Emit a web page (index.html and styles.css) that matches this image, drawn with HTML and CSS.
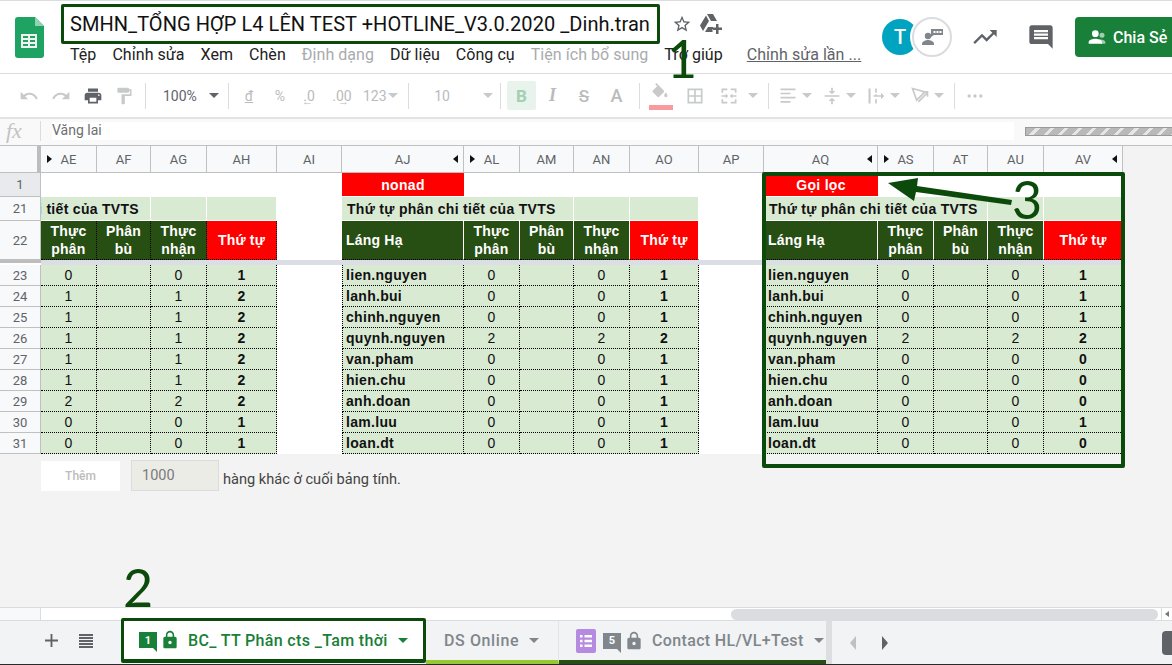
FILE: index.html
```html
<!DOCTYPE html>
<html lang="vi">
<head>
<meta charset="utf-8">
<title>SMHN</title>
<link rel="stylesheet" href="styles.css">
</head>
<body>
<div class="app">
  <header class="top">
    <svg class="logo" viewBox="0 0 29 41"><path fill="#1ea362" d="M3 0h17l9 9v29a3 3 0 0 1-3 3H3a3 3 0 0 1-3-3V3a3 3 0 0 1 3-3z"/><path fill="#8fd3b2" d="M20 0l9 9h-9z"/><path fill="#f1f1f1" d="M6 17h16v14H6zm2 2v2h5v-2zm7 0v2h5v-2zm-7 4v2h5v-2zm7 0v2h5v-2zm-7 4v2h5v-2zm7 0v2h5v-2z" fill-rule="evenodd"/></svg>
    <div class="doc">
      <div class="titlerow">
        <div class="title">SMHN_TỔNG HỢP L4 LÊN TEST +HOTLINE_V3.0.2020 _Dinh.tran</div>
        <svg class="star" viewBox="0 0 24 24"><path d="M22 9.24l-7.19-.62L12 2 9.19 8.63 2 9.24l5.46 4.73L5.82 21 12 17.27 18.18 21l-1.63-7.03L22 9.24zM12 15.4l-3.76 2.27 1-4.28-3.32-2.88 4.38-.38L12 6.1l1.71 4.04 4.38.38-3.32 2.88 1 4.28L12 15.4z"/></svg>
        <svg class="drive" viewBox="0 0 22 20"><path d="M7 0h6l4 7h-6zM6 1.500l3 5.500-6 10-3-5.500zM5 18l3-5h5v2h-0.500v3z"/><path d="M16 10h2.500v3.500H22V16h-3.500v4H16v-4h-3v-2.500h3z"/></svg>
      </div>
      <nav class="menu">
        <span>Tệp</span><span>Chỉnh sửa</span><span>Xem</span><span>Chèn</span><span class="off">Định dạng</span><span>Dữ liệu</span><span>Công cụ</span><span class="off">Tiện ích bổ sung</span><span>Trợ giúp</span><span class="last">Chỉnh sửa lần ...</span>
      </nav>
    </div>
    <div class="right">
      <div class="ava">T</div>
      <div class="ava2"><svg viewBox="0 0 22 16"><circle cx="7" cy="7" r="3.200"/><path d="M1 16v-1c0-3 4-4 6-4s6 1 6 4v1z"/><path d="M10 0h12v6h-9l-3 2z"/><path fill="#fff" d="M12.500 2h2v2h-2zm3 0h2v2h-2zm3 0h2v2h-2z"/></svg></div>
      <svg class="trend" viewBox="0 0 24 24"><path d="M16 6l2.290 2.290-4.880 4.880-4-4L2 16.590 3.410 18l6-6 4 4 6.300-6.290L22 12V6z"/></svg>
      <svg class="cmt" viewBox="0 0 24 24"><path d="M21.990 4c0-1.100-.89-2-1.990-2H4c-1.100 0-2 .9-2 2v12c0 1.100.9 2 2 2h14l4 4-.01-18zM18 14H6v-2h12v2zm0-3H6V9h12v2zm0-3H6V6h12v2z"/></svg>
      <div class="share"><svg viewBox="0 0 24 24"><circle cx="18" cy="10" r="3" opacity=".6"/><path d="M16 20v-2c0-1-.5-2-1.500-2.700 3-.6 7.500.5 7.500 2.700v2z" opacity=".6"/><circle cx="10" cy="8" r="4"/><path d="M2 20v-2c0-2.700 5.300-4 8-4s8 1.300 8 4v2z"/></svg><span>Chia Sẻ</span></div>
    </div>
  </header>

  <div class="tools">
    <span class="tb w32"><svg viewBox="0 0 24 24"><path d="M12.500 8c-2.650 0-5.050.99-6.900 2.600L2 7v9h9l-3.620-3.620c1.390-1.160 3.160-1.880 5.120-1.880 3.540 0 6.550 2.310 7.600 5.500l2.370-.78C21.080 11.030 17.150 8 12.500 8z"/></svg></span>
    <span class="tb w32"><svg viewBox="0 0 24 24"><path d="M18.400 10.600C16.550 8.990 14.150 8 11.500 8c-4.650 0-8.580 3.030-9.960 7.220L3.900 16c1.050-3.190 4.050-5.500 7.600-5.500 1.950 0 3.730.72 5.120 1.880L13 16h9V7l-3.600 3.600z"/></svg></span>
    <span class="tb w32 dark"><svg viewBox="0 0 24 24"><path d="M19 8H5c-1.660 0-3 1.340-3 3v6h4v4h12v-4h4v-6c0-1.660-1.340-3-3-3zm-3 11H8v-5h8v5zm3-7c-.55 0-1-.45-1-1s.45-1 1-1 1 .45 1 1-.45 1-1 1zm-1-9H6v4h12V3z"/></svg></span>
    <span class="tb w30"><svg viewBox="0 0 24 24"><path d="M18 4V3c0-.55-.45-1-1-1H5c-.55 0-1 .45-1 1v4c0 .55.45 1 1 1h12c.55 0 1-.45 1-1V6h1v4H9v11c0 .55.45 1 1 1h2c.55 0 1-.45 1-1v-9h8V4h-3z"/></svg></span>
    <i class="sep m6"></i>
    <span class="tb zoom">100%</span>
    <span class="tb w28 dark"><b class="caret"></b></span>
    <i class="sep"></i>
    <span class="tb w40 txt und">đ</span>
    <span class="tb w22 txt">%</span>
    <span class="tb w36 txt arrowl">.0</span>
    <span class="tb w30 txt arrowr">.00</span>
    <span class="tb w51 txt fmt">123<b class="caret"></b></span>
    <i class="sep"></i>
    <span class="tb w66 txt">10</span>
    <span class="tb w25"><b class="caret"></b></span>
    <i class="sep"></i>
    <span class="tb w29 txt bold on m6">B</span>
    <span class="tb w33 txt ital">I</span>
    <span class="tb w30 txt strike">S</span>
    <span class="tb w35 txt boldA">A</span>
    <i class="sep m5"></i>
    <span class="tb w40 fillb"><svg viewBox="0 0 24 24"><path d="M16.560 8.940L7.620 0 6.210 1.410l2.380 2.380-5.150 5.150c-.59.59-.59 1.540 0 2.120l5.500 5.500c.29.29.68.44 1.060.44s.77-.15 1.060-.44l5.500-5.500c.59-.58.59-1.530 0-2.120zM19 11.500s-2 2.170-2 3.500c0 1.100.9 2 2 2s2-.9 2-2c0-1.330-2-3.500-2-3.500z"/></svg></span>
    <span class="tb w30"><svg viewBox="0 0 24 24"><path d="M3 3v18h18V3H3zm8 16H5v-6h6v6zm0-8H5V5h6v6zm8 8h-6v-6h6v6zm0-8h-6V5h6v6z"/></svg></span>
    <span class="tb w38"><svg viewBox="0 0 24 24"><path d="M3 3h7v2H5v3H3zm11 0h7v5h-2V5h-5zM3 16h2v3h5v2H3zm16 0h2v5h-7v-2h5zM3 11h5V9l3 3-3 3v-2H3zm18 0h-5V9l-3 3 3 3v-2h5z"/></svg></span>
    <span class="tb w10"><b class="caret"></b></span>
    <i class="sep m10"></i>
    <span class="tb w25 m6"><svg viewBox="0 0 24 24"><path d="M3 3h18v2H3zm0 5h12v2H3zm0 5h18v2H3zm0 5h12v2H3z"/></svg></span>
    <span class="tb w14"><b class="caret"></b></span>
    <span class="tb w24 m6"><svg viewBox="0 0 24 24"><path d="M3 11h18v2H3zM12 10L8 6h3V2h2v4h3zM12 14l4 4h-3v4h-2v-4H8z"/></svg></span>
    <span class="tb w14"><b class="caret"></b></span>
    <span class="tb w24 m6"><svg viewBox="0 0 24 24"><path d="M3 3h2.500v18H3zM11 3h2v5h-2zm0 7h2v2h-2zm0 6h2v5h-2zM9 11h9V8l4 4-4 4v-3H9z"/></svg></span>
    <span class="tb w14"><b class="caret"></b></span>
    <span class="tb w24 m6"><svg viewBox="0 0 24 24"><path class="outl" d="M3 3l15 4-10 10zM10 19L21 8M15 7h6v6"/></svg></span>
    <span class="tb w14"><b class="caret"></b></span>
    <i class="sep m8"></i>
    <span class="tb w40"><svg viewBox="0 0 24 24"><circle cx="5" cy="12" r="2"/><circle cx="12" cy="12" r="2"/><circle cx="19" cy="12" r="2"/></svg></span>
  </div>

  <div class="fbar">
    <span class="fx">fx</span>
    <i class="fsep"></i>
    <div class="finput">Văng lai</div>
    <div class="stripes"></div>
  </div>

  <div class="sheet">
    <div class="cols">
      <div class="corner"></div>
      <div class="ch hl">AE</div><div class="ch">AF</div><div class="ch">AG</div><div class="ch">AH</div><div class="ch">AI</div>
      <div class="ch hr">AJ</div><div class="ch hl">AL</div><div class="ch">AM</div><div class="ch">AN</div><div class="ch">AO</div><div class="ch">AP</div>
      <div class="ch hr">AQ</div><div class="ch hl">AS</div><div class="ch">AT</div><div class="ch">AU</div><div class="ch hr">AV</div>

      <div class="rh">1</div>
      <div class="blank s5"></div><div class="red">nonad</div><div class="blank s5"></div>
      <div class="red">Gọi lọc</div><div class="blank s4"></div>

      <div class="rh">21</div>
      <div class="lg span2 over"><span>Thứ tự phân chi tiết của TVTS</span></div><div class="lg"></div><div class="lg"></div><div class="blank"></div>
      <div class="lg span3 lead"><span>Thứ tự phân chi tiết của TVTS</span></div><div class="lg"></div><div class="lg"></div><div class="blank"></div>
      <div class="lg span3 lead"><span>Thứ tự phân chi tiết của TVTS</span></div><div class="lg"></div><div class="lg"></div>

      <div class="rh">22</div>
      <div class="dk dot">Thực<br>phân</div><div class="dk dot">Phân<br>bù</div><div class="dk dot">Thực<br>nhận</div><div class="dk dot rd">Thứ tự</div><div class="blank"></div>
      <div class="dk left">Láng Hạ</div><div class="dk">Thực<br>phân</div><div class="dk">Phân<br>bù</div><div class="dk">Thực<br>nhận</div><div class="dk rd">Thứ tự</div><div class="blank"></div>
      <div class="dk left">Láng Hạ</div><div class="dk">Thực<br>phân</div><div class="dk">Phân<br>bù</div><div class="dk">Thực<br>nhận</div><div class="dk rd">Thứ tự</div>

      <div class="frz"></div>

      <div class="rh">23</div><div class="c">0</div><div class="c"></div><div class="c">0</div><div class="c b">1</div><div class="blank"></div><div class="c n">lien.nguyen</div><div class="c">0</div><div class="c"></div><div class="c">0</div><div class="c b">1</div><div class="blank"></div><div class="c n">lien.nguyen</div><div class="c">0</div><div class="c"></div><div class="c">0</div><div class="c b">1</div>
      <div class="rh">24</div><div class="c">1</div><div class="c"></div><div class="c">1</div><div class="c b">2</div><div class="blank"></div><div class="c n">lanh.bui</div><div class="c">0</div><div class="c"></div><div class="c">0</div><div class="c b">1</div><div class="blank"></div><div class="c n">lanh.bui</div><div class="c">0</div><div class="c"></div><div class="c">0</div><div class="c b">1</div>
      <div class="rh">25</div><div class="c">1</div><div class="c"></div><div class="c">1</div><div class="c b">2</div><div class="blank"></div><div class="c n">chinh.nguyen</div><div class="c">0</div><div class="c"></div><div class="c">0</div><div class="c b">1</div><div class="blank"></div><div class="c n">chinh.nguyen</div><div class="c">0</div><div class="c"></div><div class="c">0</div><div class="c b">1</div>
      <div class="rh">26</div><div class="c">1</div><div class="c"></div><div class="c">1</div><div class="c b">2</div><div class="blank"></div><div class="c n">quynh.nguyen</div><div class="c">2</div><div class="c"></div><div class="c">2</div><div class="c b">2</div><div class="blank"></div><div class="c n">quynh.nguyen</div><div class="c">2</div><div class="c"></div><div class="c">2</div><div class="c b">2</div>
      <div class="rh">27</div><div class="c">1</div><div class="c"></div><div class="c">1</div><div class="c b">2</div><div class="blank"></div><div class="c n">van.pham</div><div class="c">0</div><div class="c"></div><div class="c">0</div><div class="c b">1</div><div class="blank"></div><div class="c n">van.pham</div><div class="c">0</div><div class="c"></div><div class="c">0</div><div class="c b">0</div>
      <div class="rh">28</div><div class="c">1</div><div class="c"></div><div class="c">1</div><div class="c b">2</div><div class="blank"></div><div class="c n">hien.chu</div><div class="c">0</div><div class="c"></div><div class="c">0</div><div class="c b">1</div><div class="blank"></div><div class="c n">hien.chu</div><div class="c">0</div><div class="c"></div><div class="c">0</div><div class="c b">0</div>
      <div class="rh">29</div><div class="c">2</div><div class="c"></div><div class="c">2</div><div class="c b">2</div><div class="blank"></div><div class="c n">anh.doan</div><div class="c">0</div><div class="c"></div><div class="c">0</div><div class="c b">1</div><div class="blank"></div><div class="c n">anh.doan</div><div class="c">0</div><div class="c"></div><div class="c">0</div><div class="c b">0</div>
      <div class="rh">30</div><div class="c">0</div><div class="c"></div><div class="c">0</div><div class="c b">1</div><div class="blank"></div><div class="c n">lam.luu</div><div class="c">0</div><div class="c"></div><div class="c">0</div><div class="c b">1</div><div class="blank"></div><div class="c n">lam.luu</div><div class="c">0</div><div class="c"></div><div class="c">0</div><div class="c b">1</div>
      <div class="rh">31</div><div class="c">0</div><div class="c"></div><div class="c">0</div><div class="c b">1</div><div class="blank"></div><div class="c n">loan.dt</div><div class="c">0</div><div class="c"></div><div class="c">0</div><div class="c b">1</div><div class="blank"></div><div class="c n">loan.dt</div><div class="c">0</div><div class="c"></div><div class="c">0</div><div class="c b">0</div>
    </div>
    <div class="addrows">
      <div class="addbtn">Thêm</div>
      <div class="addnum">1000</div>
      <div class="addtxt">hàng khác ở cuối bảng tính.</div>
    </div>
  </div>

  <div class="hscroll"><div class="hs-l"></div><div class="hs-m"><div class="thumb"></div></div><div class="hs-r"><b class="tri-l small"></b></div></div>

  <div class="tabs">
    <svg class="t-plus" viewBox="0 0 14 14"><path d="M6 0h2v6h6v2H8v6H6V8H0V6h6z"/></svg>
    <svg class="t-list" viewBox="0 0 14 14"><path d="M0 0h14v2H0zm0 3h14v2H0zm0 3h14v2H0zm0 3h14v2H0zm0 3h14v2H0z"/></svg>
    <div class="tab active">
      <span class="badge grn">1</span>
      <svg class="lock grnf" viewBox="0 0 24 24"><path d="M18 8h-1V6c0-2.760-2.240-5-5-5S7 3.240 7 6v2H6c-1.100 0-2 .9-2 2v10c0 1.100.9 2 2 2h12c1.100 0 2-.9 2-2V10c0-1.100-.9-2-2-2zm-6 9c-1.100 0-2-.9-2-2s.9-2 2-2 2 .9 2 2-.9 2-2 2zm3.100-9H8.900V6c0-1.710 1.390-3.100 3.100-3.100 1.710 0 3.100 1.390 3.100 3.100v2z"/></svg>
      <span class="tname">BC_ TT Phân cts _Tam thời</span>
      <b class="caret"></b>
    </div>
    <div class="tab t2">
      <span class="tname">DS Online</span>
      <b class="caret"></b>
    </div>
    <div class="tab t3">
      <svg class="form" viewBox="0 0 20 24"><rect width="20" height="24" rx="2" fill="#b58ae0"/><path fill="#fff" d="M4 6h2.500v2.500H4zm4.500 0H16v2.500H8.500zM4 10.800h2.500v2.500H4zm4.500 0H16v2.500H8.500zM4 15.500h2.500V18H4zm4.500 0H16V18H8.500z"/></svg>
      <span class="badge gry">5</span>
      <svg class="lock gryf" viewBox="0 0 24 24"><path d="M18 8h-1V6c0-2.760-2.240-5-5-5S7 3.240 7 6v2H6c-1.100 0-2 .9-2 2v10c0 1.100.9 2 2 2h12c1.100 0 2-.9 2-2V10c0-1.100-.9-2-2-2zm-6 9c-1.100 0-2-.9-2-2s.9-2 2-2 2 .9 2 2-.9 2-2 2zm3.100-9H8.900V6c0-1.710 1.390-3.100 3.100-3.100 1.710 0 3.100 1.390 3.100 3.100v2z"/></svg>
      <span class="tname">Contact HL/VL+Test</span>
      <b class="caret"></b>
    </div>
    <div class="tsep"></div>
    <b class="tri-l nav1"></b>
    <b class="tri-r nav2"></b>
    <div class="explore"></div>
  </div>

  <div class="anno one">1</div>
  <div class="anno two">2</div>
  <div class="anno three">3</div>
  <div class="box3"></div>
  <svg class="arrow" viewBox="0 0 140 40"><path fill="#0b4a0b" d="M8 13L38 8l-1 8 95 14-1 5-95-13-2 9z"/></svg>
</div>
</body>
</html>
```
FILE: styles.css
```css
* { box-sizing: border-box; }
html, body { margin: 0; padding: 0; }
body { font-family: Roboto, "Liberation Sans", sans-serif; background: #f3f3f3; }
.app { position: relative; width: 1172px; height: 665px; overflow: hidden; display: flex; flex-direction: column; background: #f3f3f3; }

/* top bar */
.top { height: 74px; flex: none; display: flex; background: #fff; border-top: 1px solid #dadce0; border-bottom: 1px solid #dadce0; overflow: hidden; }
.logo { width: 29px; height: 41px; margin: 16px 17px 0 15px; flex: none; }
.doc { width: 821px; flex: none; padding-top: 3px; }
.titlerow { display: flex; align-items: center; }
.title { width: 599px; height: 40px; flex: none; border: 3px solid #0b4a0b; border-radius: 2px; padding-left: 6px; font-size: 20px; line-height: 34px; letter-spacing: 0.05px; color: #111; white-space: nowrap; overflow: hidden; }
.star { width: 20px; height: 20px; margin-left: 12px; fill: #5f6368; }
.drive { width: 22px; height: 20px; margin-left: 8px; fill: #5f6368; }
.menu { display: flex; gap: 16px; padding-left: 9px; font-size: 16px; line-height: 22px; letter-spacing: 0.05px; color: #222; white-space: nowrap; }
.menu .off { color: #a9abae; }
.menu .last { margin-left: 8px; color: #5f6368; text-decoration: underline; }
.right { display: flex; align-items: center; height: 72px; flex: none; }
.ava { width: 36px; height: 36px; border-radius: 50%; background: #00a4c0; color: #fff; font-size: 20px; font-weight: 500; display: flex; align-items: center; justify-content: center; flex: none; }
.ava2 { width: 40px; height: 40px; margin-left: -6px; border-radius: 50%; background: #fff; border: 2px solid #dadce0; box-shadow: 0 0 0 2px #fff; display: flex; align-items: center; justify-content: center; flex: none; position: relative; }
.ava2 svg { width: 22px; height: 16px; fill: #80868b; }
.trend { width: 28px; height: 28px; margin-left: 19px; fill: #5f6368; flex: none; }
.cmt { width: 28px; height: 28px; margin-left: 28px; fill: #5f6368; flex: none; }
.share { width: 120px; height: 40px; margin-left: 20px; border-radius: 4px; background: #188038; color: #fff; display: flex; align-items: center; padding-left: 12px; gap: 6px; font-size: 16px; font-weight: 500; flex: none; }
.share svg { width: 20px; height: 20px; fill: #fff; }

/* toolbar */
.tools { height: 45px; flex: none; display: flex; align-items: center; padding-left: 13px; background: #fff; border-bottom: 2px solid #e3e3e3; color: #b9bbbe; font-size: 14px; }
.tb { display: flex; align-items: center; justify-content: center; height: 29px; flex: none; fill: #c8c9cb; }
.tb svg { width: 20px; height: 20px; }
.tb.dark { fill: #5f6368; }
.outl { fill: none; stroke: #c8c9cb; stroke-width: 2; }
.w10 { width: 10px; } .w14 { width: 14px; } .w22 { width: 22px; } .w24 { width: 24px; } .w25 { width: 25px; } .w28 { width: 28px; } .w29 { width: 29px; } .w30 { width: 30px; } .w32 { width: 32px; } .w33 { width: 33px; } .w35 { width: 35px; } .w36 { width: 36px; } .w38 { width: 38px; } .w40 { width: 40px; } .w51 { width: 51px; } .w66 { width: 66px; }
.m5 { margin-left: 5px; } .m6 { margin-left: 6px; } .m8 { margin-left: 8px; } .m10 { margin-left: 10px; }
.zoom { width: 54px; padding-left: 17px; justify-content: flex-start; color: #5f6368; }
.sep { width: 1px; height: 26px; background: #dadce0; flex: none; }
.caret { display: inline-block; width: 0; height: 0; border-left: 5px solid transparent; border-right: 5px solid transparent; border-top: 5px solid #c8c9cb; }
.tb.dark .caret { border-top-color: #5f6368; }
.txt { color: #b9bbbe; }
.und { text-decoration: underline; }
.fmt { justify-content: flex-start; padding-left: 6px; gap: 1px; }
.bold { font-weight: 700; font-size: 17px; }
.on { background: #e8f3ec; color: #a3cfb4; border-radius: 2px; }
.ital { font-style: italic; font-family: "Liberation Serif", serif; font-size: 18px; font-weight: 700; }
.strike { font-size: 17px; text-decoration: line-through; font-weight: 500; }
.boldA { font-size: 18px; font-weight: 500; }
.arrowl, .arrowr { position: relative; }
.arrowl::after { content: "←"; position: absolute; left: 11px; top: 15px; font-size: 11px; line-height: 12px; }
.arrowr::after { content: "→"; position: absolute; left: 11px; top: 15px; font-size: 11px; line-height: 12px; }
.fillb svg { margin-top: -6px; }
.fillb { position: relative; }
.fillb::after { content: ""; position: absolute; left: 9px; bottom: 0; width: 24px; height: 5px; background: #f99a9e; }

/* formula bar */
.fbar { height: 27px; flex: none; display: flex; align-items: center; background: #f9f9f9; border-bottom: 1px solid #c0c0c0; padding-bottom: 2px; }
.fx { width: 40px; padding-left: 6px; font: italic 22px "Liberation Serif", serif; color: #c3c3c3; flex: none; }
.fsep { width: 1px; height: 20px; background: #dadce0; flex: none; }
.finput { width: 962px; height: 18px; margin-left: 11px; background: #fff; font-size: 14px; line-height: 16px; color: #6d6f72; flex: none; }
.stripes { width: 160px; height: 9px; margin-left: 11px; border: 1px solid #999; background: repeating-linear-gradient(135deg, #b9b9b9 0 7px, #e6e6e6 7px 10px); flex: none; }

/* sheet */
.sheet { height: 461px; flex: none; display: flex; flex-direction: column; }
.cols { width: 1123px; display: grid; grid-template-columns: 41px 56px 54px 56px 70px 65px 122px 56px 54px 56px 69px 65px 114px 56px 54px 56px 79px; grid-template-rows: 27px 24px 24px 39px 5px repeat(9, 21px); background: #fff; font: 14px "Liberation Sans", Arial, sans-serif; color: #111; }
.corner { background: #f8f9fa; border-right: 4px solid #bdbdbd; border-bottom: 1px solid #c0c0c0; }
.ch { position: relative; display: flex; align-items: center; justify-content: center; background: #f8f9fa; border-right: 1px solid #c0c0c0; border-bottom: 1px solid #c0c0c0; font: 13px Roboto, sans-serif; color: #5f6368; }
.hl::before { content: ""; position: absolute; left: 6px; top: 9px; border-left: 5px solid #111; border-top: 4px solid transparent; border-bottom: 4px solid transparent; }
.hr::after { content: ""; position: absolute; right: 5px; top: 9px; border-right: 5px solid #111; border-top: 4px solid transparent; border-bottom: 4px solid transparent; }
.rh { display: flex; align-items: center; justify-content: center; background: #f8f9fa; border-right: 1px solid #c0c0c0; border-bottom: 1px solid #c0c0c0; font: 13px Roboto, sans-serif; color: #5f6368; }
.cols > .rh:nth-child(18) { background: #e8eaed; }
.s5 { grid-column: span 5; } .s4 { grid-column: span 4; }
.red { background: #f00; color: #fff; font-weight: 700; display: flex; align-items: center; justify-content: center; letter-spacing: 0.3px; border-bottom: 1px solid #fff; }
.lg { background: #d9ead3; border-right: 1px solid #fff; border-bottom: 1px solid #fff; font-weight: 700; display: flex; align-items: center; overflow: hidden; white-space: nowrap; letter-spacing: 0.3px; }
.span2 { grid-column: span 2; } .span3 { grid-column: span 3; }
.over { justify-content: flex-end; padding-right: 11px; }
.over span, .lead span { flex: none; }
.lead { padding-left: 5px; }
.dk { background: #274e13; color: #fff; font-weight: 700; line-height: 18px; text-align: center; display: flex; align-items: center; justify-content: center; border-right: 1px solid #fff; border-bottom: 1px dotted #000; letter-spacing: 0.2px; }
.dk.dot { border-right: 1px dotted #000; }
.dk.left { justify-content: flex-start; padding-left: 4px; }
.dk.rd { background: #f00; }
.frz { grid-column: 2 / -1; background: #dcdee6; position: relative; }
.frz::before { content: ""; position: absolute; left: -41px; top: 0; width: 41px; height: 3px; background: #bdbdbd; }
.c { background: #d9ead3; border-right: 1px dotted #000; border-bottom: 1px dotted #000; display: flex; align-items: center; justify-content: center; letter-spacing: 0.1px; }
.c.b { font-weight: 700; }
.c.n { justify-content: flex-start; padding-left: 3px; font-weight: 700; letter-spacing: 0.3px; border-left: 1px dotted #000; }
.addrows { display: flex; align-items: flex-start; padding: 6px 0 0 41px; }
.addbtn { width: 79px; height: 30px; margin-top: 1px; background: #fff; color: #bcbcbc; font-size: 12px; font-weight: 500; display: flex; align-items: center; justify-content: center; }
.addnum { width: 88px; height: 31px; margin-left: 11px; background: #ecece7; border: 1px solid #dcdcdc; color: #7a7a7a; font: 14.500px Roboto, sans-serif; padding-left: 10px; line-height: 30px; }
.addtxt { margin: 10px 0 0 4px; font-size: 14.600px; line-height: 18px; color: #444; }

/* scroll */
.hscroll { height: 13px; flex: none; display: flex; border-top: 1px solid #dadce0; }
.hs-l { width: 41px; background: #f8f9fa; border-right: 1px solid #dadce0; }
.hs-m { width: 1120px; background: #fff; padding: 1px 0 0 690px; }
.thumb { width: 427px; height: 11px; border-radius: 6px; background: #dadce0; }
.hs-r { width: 11px; background: #fff; border-left: 1px solid #dadce0; display: flex; align-items: center; justify-content: center; }
.tri-l { display: block; width: 0; height: 0; border-right: 6px solid #bdc1c6; border-top: 7px solid transparent; border-bottom: 7px solid transparent; }
.tri-l.small { border-right: 4px solid #777; border-top-width: 3px; border-bottom-width: 3px; }
.tri-r { display: block; width: 0; height: 0; border-left: 6px solid #5f6368; border-top: 7px solid transparent; border-bottom: 7px solid transparent; }

/* tabs */
.tabs { height: 45px; flex: none; display: flex; align-items: flex-start; background: #f1f3f4; border-top: 1px solid #dadce0; border-bottom: 1px solid #2a2a2a; position: relative; }
.t-plus { width: 13px; height: 13px; margin: 13px 0 0 45px; fill: #5f6368; flex: none; }
.t-list { width: 14px; height: 14px; margin: 13px 0 0 21px; fill: #5f6368; flex: none; }
.tab { display: flex; align-items: center; height: 43px; flex: none; font-size: 16px; font-weight: 500; color: #80868b; white-space: nowrap; }
.tab .caret { border-top-color: #80868b; }
.active { width: 305px; height: 45px; margin: -3px 0 0 28px; padding: 0 0 0 15px; background: #fff; border: 3px solid #0b4a0b; border-bottom-width: 4px; border-radius: 2px; color: #188038; position: relative; }
.active .caret { border-top-color: #188038; }
.active .tname { margin: 0 10px 0 8px; letter-spacing: 0.35px; }
.badge { width: 18px; height: 16px; font-size: 11px; font-weight: 700; color: #fff; display: flex; align-items: center; justify-content: center; flex: none; position: relative; }
.badge::after { content: ""; position: absolute; right: 0; bottom: -4px; border-left: 4px solid transparent; }
.grn { background: #188038; }
.grn::after { border-top: 4px solid #188038; }
.gry { background: #80868b; }
.gry::after { border-top: 4px solid #80868b; }
.lock { width: 20px; height: 20px; margin-left: 3px; flex: none; }
.grnf { fill: #188038; }
.gryf { fill: #80868b; }
.t2 { width: 133px; padding-left: 18px; border-bottom: 4px solid #97c832; border-right: 1px solid #e3e5e6; }
.t2 .tname { margin-right: 10px; letter-spacing: 0.6px; }
.t3 { width: 267px; padding-left: 17px; border-bottom: 4px solid #274e13; }
.form { width: 20px; height: 24px; flex: none; margin-right: 7px; }
.t3 .tname { margin: 0 10px 0 8px; letter-spacing: 0.35px; }
.tsep { width: 6px; height: 43px; background: #dcdedf; flex: none; }
.nav1 { margin: 15px 0 0 18px; flex: none; }
.nav2 { margin: 15px 0 0 26px; flex: none; }
.explore { position: absolute; left: 1162px; top: 10px; width: 24px; height: 24px; border-radius: 4px; background: #5f6368; }

/* annotations */
.anno { position: absolute; font-family: Lato, sans-serif; font-size: 52px; line-height: 52px; color: #0b4a0b; }
.one { left: 667px; top: 32px; }
.two { left: 123px; top: 561px; }
.three { left: 1012px; top: 173px; }
.box3 { position: absolute; left: 762px; top: 172px; width: 363px; height: 296px; border: 4px solid #0b4a0b; border-radius: 2px; }
.arrow { position: absolute; left: 880px; top: 170px; width: 140px; height: 40px; }
```
